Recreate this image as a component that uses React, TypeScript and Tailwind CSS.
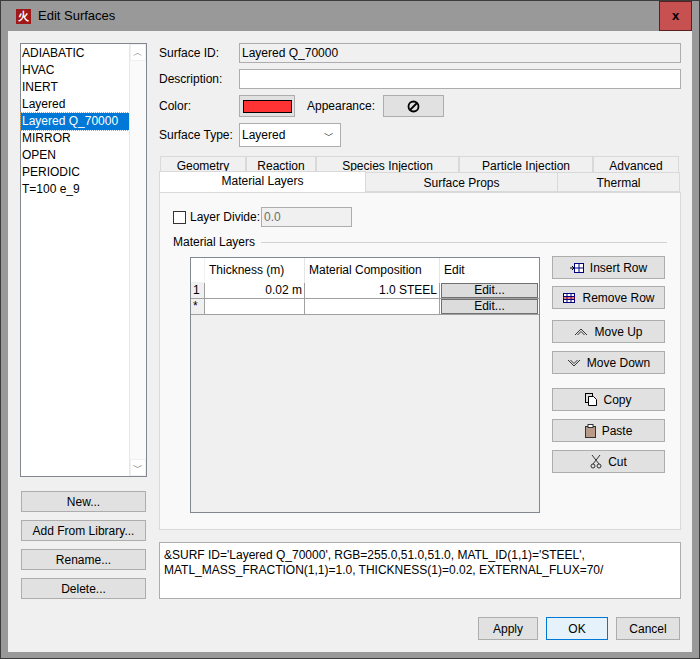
import React from "react";

const Btn = ({ children, className = "" }: { children: React.ReactNode; className?: string }) => (
  <div className={`flex items-center justify-center whitespace-nowrap border border-[#adadad] bg-[#e1e1e1] text-[12px] text-black ${className}`}>{children}</div>
);

const items = ["ADIABATIC", "HVAC", "INERT", "Layered", "Layered Q_70000", "MIRROR", "OPEN", "PERIODIC", "T=100 e_9"];

const IconInsert = () => (
  <svg width="14" height="12" viewBox="0 0 14 12" className="mr-1.5"><path d="M0 6h3M2 4l2 2-2 2" stroke="#000" fill="none"/><rect x="4.5" y="1.5" width="9" height="9" fill="#fff" stroke="#000080"/><path d="M4.5 6h9M9 1.5v9" stroke="#000080"/></svg>
);
const IconRemove = () => (
  <svg width="14" height="12" viewBox="0 0 14 12" className="mr-1.5"><rect x="1.5" y="1.5" width="11" height="9" fill="#fff" stroke="#000080"/><path d="M1.5 4.5h11M1.5 7.5h11M5 1.5v9M9 1.5v9" stroke="#000080"/><path d="M1 6h12" stroke="#c00"/></svg>
);
const IconUp = () => (
  <svg width="14" height="10" viewBox="0 0 14 10" className="mr-1.5"><path d="M1 8l6-6 6 6M3.5 8L7 4.5 10.5 8" stroke="#333" fill="none"/></svg>
);
const IconDown = () => (
  <svg width="14" height="10" viewBox="0 0 14 10" className="mr-1.5"><path d="M1 2l6 6 6-6M3.5 2L7 5.5 10.5 2" stroke="#333" fill="none"/></svg>
);
const IconCopy = () => (
  <svg width="12" height="13" viewBox="0 0 12 13" className="mr-1.5"><rect x="0.5" y="0.5" width="7" height="9" fill="#ddd" stroke="#000"/><path d="M3.5 3.5h5l3 3v6h-8z" fill="#fff" stroke="#000"/></svg>
);
const IconPaste = () => (
  <svg width="11" height="14" viewBox="0 0 11 14" className="mr-1.5"><rect x="0.5" y="2.5" width="10" height="11" fill="#b89a88" stroke="#333"/><rect x="3" y="0.5" width="5" height="3" fill="#fff" stroke="#333"/></svg>
);
const IconCut = () => (
  <svg width="12" height="14" viewBox="0 0 12 14" className="mr-1.5"><path d="M2 0l7 9M10 0L3 9" stroke="#333"/><circle cx="3" cy="11" r="2" fill="none" stroke="#333"/><circle cx="9" cy="11" r="2" fill="none" stroke="#333"/></svg>
);

export default function App() {
  return (
    <div className="w-[700px] h-[659px] bg-[#999999] border border-[#3c3c3c] flex flex-col text-black" style={{ fontFamily: "'Liberation Sans', Arial, sans-serif" }}>
      <div className="h-[30px] flex items-center shrink-0">
        <div className="ml-[15px] w-[15px] h-[15px] bg-[#a01818] flex items-center justify-center text-white text-[11px] font-bold">火</div>
        <div className="ml-[7px] text-[13px] text-black">Edit Surfaces</div>
        <div className="ml-auto mr-[7px] w-[33px] h-[30px] bg-[#c75050] border border-[#5a2020] flex items-center justify-center text-[13px] font-bold">x</div>
      </div>
      <div className="mx-[7px] mb-[6px] flex-1 bg-[#f0f0f0] flex text-[12px]">
        {/* left */}
        <div className="w-[150px] flex flex-col pl-[12px] pt-[12px]">
          <div className="w-[127px] h-[434px] bg-white border border-[#828790] flex">
            <div className="flex-1 pt-[1px]">
              {items.map((t) => (
                <div key={t} className={`h-[17px] leading-[17px] pl-[1px] whitespace-nowrap ${t === "Layered Q_70000" ? "bg-[#0078d7] text-white outline-1 outline-dotted outline-[#e0a040]" : ""}`}>{t}</div>
              ))}
            </div>
            <div className="w-[17px] border-l border-[#e6e6e6] flex flex-col justify-between bg-[#fafafa]">
              <div className="h-[17px] flex items-center justify-center text-[10px] text-[#606060] bg-white border border-[#f0f0f0]">︿</div>
              <div className="h-[17px] flex items-center justify-center text-[10px] text-[#606060] bg-white border border-[#f0f0f0]">﹀</div>
            </div>
          </div>
          <div className="mt-[14px] flex flex-col gap-[8px] pl-[1px]">
            <Btn className="w-[125px] h-[21px]">New...</Btn>
            <Btn className="w-[125px] h-[21px]">Add From Library...</Btn>
            <Btn className="w-[125px] h-[21px]">Rename...</Btn>
            <Btn className="w-[125px] h-[21px]">Delete...</Btn>
          </div>
        </div>
        {/* right */}
        <div className="flex-1 flex flex-col pt-[12px] pl-[1px] pr-[11px]">
          <div className="flex items-center h-[20px]">
            <div className="w-[80px]">Surface ID:</div>
            <div className="flex-1 h-[20px] border border-[#adadad] bg-[#f0f0f0] pl-[2px] leading-[18px]">Layered Q_70000</div>
          </div>
          <div className="flex items-center h-[20px] mt-[6px]">
            <div className="w-[80px]">Description:</div>
            <div className="flex-1 h-[20px] border border-[#adadad] bg-white"></div>
          </div>
          <div className="flex items-center h-[22px] mt-[6px]">
            <div className="w-[80px]">Color:</div>
            <div className="w-[56px] h-[22px] border border-[#adadad] bg-[#e1e1e1] flex items-center justify-center"><div className="w-[49px] h-[13px] bg-[#ff3333] border border-black"></div></div>
            <div className="ml-[12px] w-[76px]">Appearance:</div>
            <div className="w-[61px] h-[22px] border border-[#adadad] bg-[#e1e1e1] flex items-center justify-center">
              <svg width="13" height="13" viewBox="0 0 13 13"><circle cx="6.5" cy="6.5" r="5" stroke="#000" strokeWidth="1.8" fill="none"/><path d="M3 10L10 3" stroke="#000" strokeWidth="1.8"/></svg>
            </div>
          </div>
          <div className="flex items-center h-[24px] mt-[6px]">
            <div className="w-[80px]">Surface Type:</div>
            <div className="w-[102px] h-[24px] border border-[#adadad] bg-white flex items-center pl-[2px]">Layered<span className="ml-auto mr-[6px] text-[10px]">﹀</span></div>
          </div>
          {/* tabs */}
          <div className="mt-[9px] flex h-[16px] pl-[1px]">
            {[["Geometry", 86], ["Reaction", 70], ["Species Injection", 143], ["Particle Injection", 134], ["Advanced", 86]].map(([t, w]) => (
              <div key={t as string} style={{ width: w as number }} className="border border-[#d9d9d9] border-b-0 bg-[#f0f0f0] text-center leading-[18px] overflow-hidden">{t}</div>
            ))}
          </div>
          <div className="flex h-[20px] relative">
            <div className="w-[207px] h-[21px] bg-white border border-[#d9d9d9] border-b-0 text-center leading-[18px] -mt-[1px] z-10">Material Layers</div>
            <div className="w-[192px] border border-[#d9d9d9] border-l-0 bg-[#f0f0f0] text-center leading-[20px]">Surface Props</div>
            <div className="w-[122px] border border-[#d9d9d9] border-l-0 bg-[#f0f0f0] text-center leading-[20px]">Thermal</div>
          </div>
          <div className="h-[338px] w-[522px] border border-[#d9d9d9] bg-[#f9f9f9] flex flex-col px-[13px] pt-[14px]">
            <div className="flex items-center h-[20px] whitespace-nowrap">
              <div className="w-[13px] h-[13px] border border-[#333] bg-white"></div>
              <div className="ml-[4px] w-[71px]">Layer Divide:</div>
              <div className="w-[91px] h-[20px] border border-[#adadad] bg-[#f0f0f0] text-[#6d6d6d] pl-[2px] leading-[18px]">0.0</div>
            </div>
            <div className="flex items-center mt-[6px]">
              <span>Material Layers</span>
              <div className="flex-1 h-px bg-[#d0d0d0] ml-[6px]"></div>
            </div>
            <div className="flex mt-[6px]">
              <div className="ml-[17px] w-[350px] h-[256px] border border-[#828790] bg-[#f0f0f0]">
                <div className="flex h-[25px] bg-white">
                  <div className="w-[14px] border-r border-b border-[#f0f0f0]"></div>
                  <div className="w-[100px] border-r border-[#e5e5e5] pl-[4px] leading-[25px]">Thickness (m)</div>
                  <div className="w-[135px] border-r border-[#e5e5e5] pl-[4px] leading-[25px] whitespace-nowrap">Material Composition</div>
                  <div className="flex-1 pl-[4px] leading-[25px]">Edit</div>
                </div>
                {[["1", "0.02 m", "1.0 STEEL"], ["*", "", ""]].map(([n, a, b]) => (
                  <div key={n} className="flex h-[16px] leading-[15px] border-b border-[#a0a0a0] bg-white">
                    <div className="w-[14px] pl-[2px] bg-[#f0f0f0] border-r border-[#a0a0a0]">{n}</div>
                    <div className="w-[100px] border-r border-[#a0a0a0] text-right pr-[2px]">{a}</div>
                    <div className="w-[135px] border-r border-[#a0a0a0] text-right pr-[2px]">{b}</div>
                    <div className="flex-1 mx-[1px] bg-[#dcdcdc] border border-[#707070] text-center leading-[12px]">Edit...</div>
                  </div>
                ))}
              </div>
              <div className="ml-[12px] flex flex-col w-[113px] -mt-[1px]">
                <Btn className="h-[23px]"><IconInsert />Insert Row</Btn>
                <Btn className="h-[23px] mt-[7px]"><IconRemove />Remove Row</Btn>
                <Btn className="h-[23px] mt-[11px]"><IconUp />Move Up</Btn>
                <Btn className="h-[23px] mt-[8px]"><IconDown />Move Down</Btn>
                <Btn className="h-[23px] mt-[14px]"><IconCopy />Copy</Btn>
                <Btn className="h-[23px] mt-[8px]"><IconPaste />Paste</Btn>
                <Btn className="h-[23px] mt-[8px]"><IconCut />Cut</Btn>
              </div>
            </div>
          </div>
          <div className="mt-[12px] h-[57px] border border-[#adadad] bg-white px-[4px] pt-[5px] leading-[15px]">
            &amp;SURF ID='Layered Q_70000', RGB=255.0,51.0,51.0, MATL_ID(1,1)='STEEL',<br />MATL_MASS_FRACTION(1,1)=1.0, THICKNESS(1)=0.02, EXTERNAL_FLUX=70/
          </div>
          <div className="mt-[18px] flex justify-end gap-[8px] pr-[1px]">
            <Btn className="w-[60px] h-[23px]">Apply</Btn>
            <Btn className="w-[62px] h-[23px] !border-[#0078d7] bg-[#e5f1fb]">OK</Btn>
            <Btn className="w-[64px] h-[23px]">Cancel</Btn>
          </div>
        </div>
      </div>
    </div>
  );
}
